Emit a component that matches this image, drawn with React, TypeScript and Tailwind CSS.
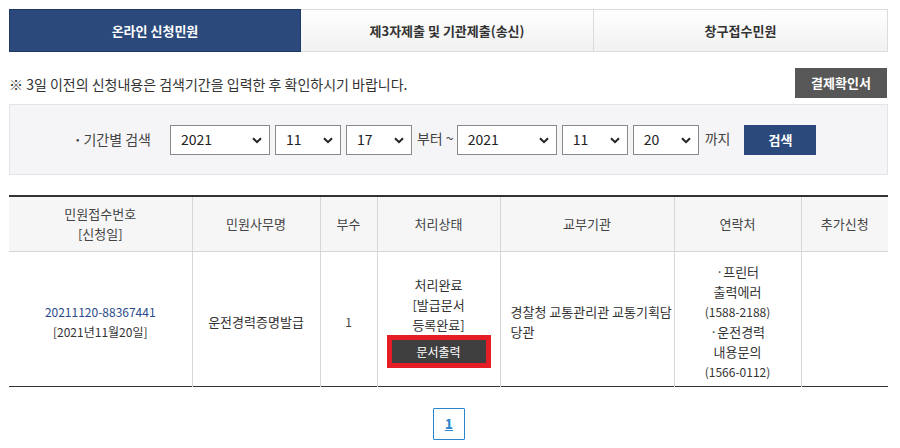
import React from "react";

const font = { fontFamily: '"Noto Sans CJK KR", "Noto Sans", sans-serif' };

function Sel({ value, w }: { value: string; w: string }) {
  return (
    <div className={`relative h-[30px] ${w} border border-[#8a8a8a] bg-white flex items-center pl-[10px] text-[14px] text-[#222]`}>
      <span>{value}</span>
      <svg className="absolute right-[7px] top-[11px]" width="10" height="7" viewBox="0 0 10 7">
        <path d="M1 1.2 L5 5.2 L9 1.2" fill="none" stroke="#222" strokeWidth="2" />
      </svg>
    </div>
  );
}

export default function App() {
  return (
    <div className="w-[900px] h-[448px] bg-white overflow-hidden text-[#333]" style={font}>
      <div className="ml-[9px] w-[879px] pt-[9px]">
        {/* tabs */}
        <div className="flex h-[43px]">
          <div className="w-[292px] bg-[#2b4a7b] border border-[#1f3a66] text-white font-bold text-[13px] flex items-center justify-center">
            온라인 신청민원
          </div>
          <div className="w-[293px] border border-l-0 border-[#dcdcdc] bg-gradient-to-b from-white to-[#f1f1f1] font-bold text-[13px] text-[#333] flex items-center justify-center">
            제3자제출 및 기관제출(송신)
          </div>
          <div className="w-[294px] border border-l-0 border-[#dcdcdc] bg-gradient-to-b from-white to-[#f1f1f1] font-bold text-[13px] text-[#333] flex items-center justify-center">
            창구접수민원
          </div>
        </div>

        {/* notice row */}
        <div className="flex items-center justify-between mt-[16px] h-[30px]">
          <div className="text-[14px] text-[#333] pt-[2px]">※ 3일 이전의 신청내용은 검색기간을 입력한 후 확인하시기 바랍니다.</div>
          <div className="w-[92px] h-[30px] bg-[#575757] text-white text-[13px] font-bold flex items-center justify-center mr-[1px]">
            결제확인서
          </div>
        </div>

        {/* search box */}
        <div className="mt-[6px] h-[71px] bg-[#f5f5f7] border border-[#e4e4e6] flex items-center pl-[66px]">
          <span className="text-[14px] text-[#444] mr-[19px]">
            <span className="text-[10px] mr-[4px] relative top-[-2px]">•</span>기간별 검색
          </span>
          <div className="flex items-center gap-[5px]">
            <Sel value="2021" w="w-[100px]" />
            <Sel value="11" w="w-[66px]" />
            <Sel value="17" w="w-[66px]" />
          </div>
          <span className="text-[14px] text-[#444] ml-[5px] mr-[3px] -mt-[3px]">부터 ~</span>
          <div className="flex items-center gap-[5px]">
            <Sel value="2021" w="w-[100px]" />
            <Sel value="11" w="w-[66px]" />
            <Sel value="20" w="w-[66px]" />
          </div>
          <span className="text-[14px] text-[#444] ml-[6px] -mt-[3px]">까지</span>
          <div className="ml-[14px] w-[72px] h-[30px] bg-[#2b4a7b] text-white text-[13px] font-bold flex items-center justify-center">
            검색
          </div>
        </div>

        {/* table */}
        <table className="mt-[20px] w-[879px] border-collapse table-fixed text-[13px] text-[#444]">
          <colgroup>
            <col className="w-[183px]" />
            <col className="w-[128px]" />
            <col className="w-[57px]" />
            <col className="w-[123px]" />
            <col className="w-[174px]" />
            <col className="w-[127px]" />
            <col className="w-[87px]" />
          </colgroup>
          <thead>
            <tr className="h-[55px] bg-[#f6f6f6] border-t-2 border-t-[#333] border-b border-b-[#d6d6d6]">
              <th className="font-normal leading-[20px] border-r border-[#d6d6d6]">
                민원접수번호
                <br />
                [신청일]
              </th>
              <th className="font-normal border-r border-[#d6d6d6]">민원사무명</th>
              <th className="font-normal border-r border-[#d6d6d6]">부수</th>
              <th className="font-normal border-r border-[#d6d6d6]">처리상태</th>
              <th className="font-normal border-r border-[#d6d6d6]">교부기관</th>
              <th className="font-normal border-r border-[#d6d6d6]">연락처</th>
              <th className="font-normal">추가신청</th>
            </tr>
          </thead>
          <tbody>
            <tr className="h-[135px] border-b border-b-[#333]">
              <td className="pt-[6px] text-center leading-[20px] border-r border-[#d6d6d6]">
                <span className="text-[#2b4a8a] text-[12px]">20211120-88367441</span>
                <br />
                <span className="text-[12px] text-[#333]">[2021년11월20일]</span>
              </td>
              <td className="pt-[6px] text-center border-r border-[#d6d6d6] text-[#333]">운전경력증명발급</td>
              <td className="pt-[6px] text-center border-r border-[#d6d6d6] text-[12px]">1</td>
              <td className="pt-[6px] text-center border-r border-[#d6d6d6] text-[#333]">
                <div className="flex flex-col items-center">
                  <div className="leading-[20px]">처리완료</div>
                  <div className="leading-[20px]">[발급문서</div>
                  <div className="leading-[20px]">등록완료]</div>
                  <div className="mt-0 w-[104px] h-[33px] border-[5px] border-[#e51d25] bg-[#3f3f3f] text-white text-[12px] flex items-center justify-center">
                    문서출력
                  </div>
                </div>
              </td>
              <td className="pt-[6px] align-middle border-r border-[#d6d6d6] text-[#333] text-[13px] pl-[10px] pr-0 leading-[20px] break-all">
                경찰청 교통관리관 교통기획담당관
              </td>
              <td className="pt-[6px] text-center border-r border-[#d6d6d6] text-[12px] leading-[20px] text-[#333]">
                <div className="text-[13px]">·프린터</div>
                <div className="text-[13px]">출력에러</div>
                <div>(1588-2188)</div>
                <div className="text-[13px]">·운전경력</div>
                <div className="text-[13px]">내용문의</div>
                <div>(1566-0112)</div>
              </td>
              <td className="pt-[6px]"></td>
            </tr>
          </tbody>
        </table>

        {/* pagination */}
        <div className="flex justify-center mt-[21px]">
          <div className="w-[32px] h-[32px] border border-[#2a86cc] rounded-[1px] flex items-center justify-center text-[#2a86cc] text-[14px] font-bold underline ml-[1px]">
            1
          </div>
        </div>
      </div>
    </div>
  );
}
